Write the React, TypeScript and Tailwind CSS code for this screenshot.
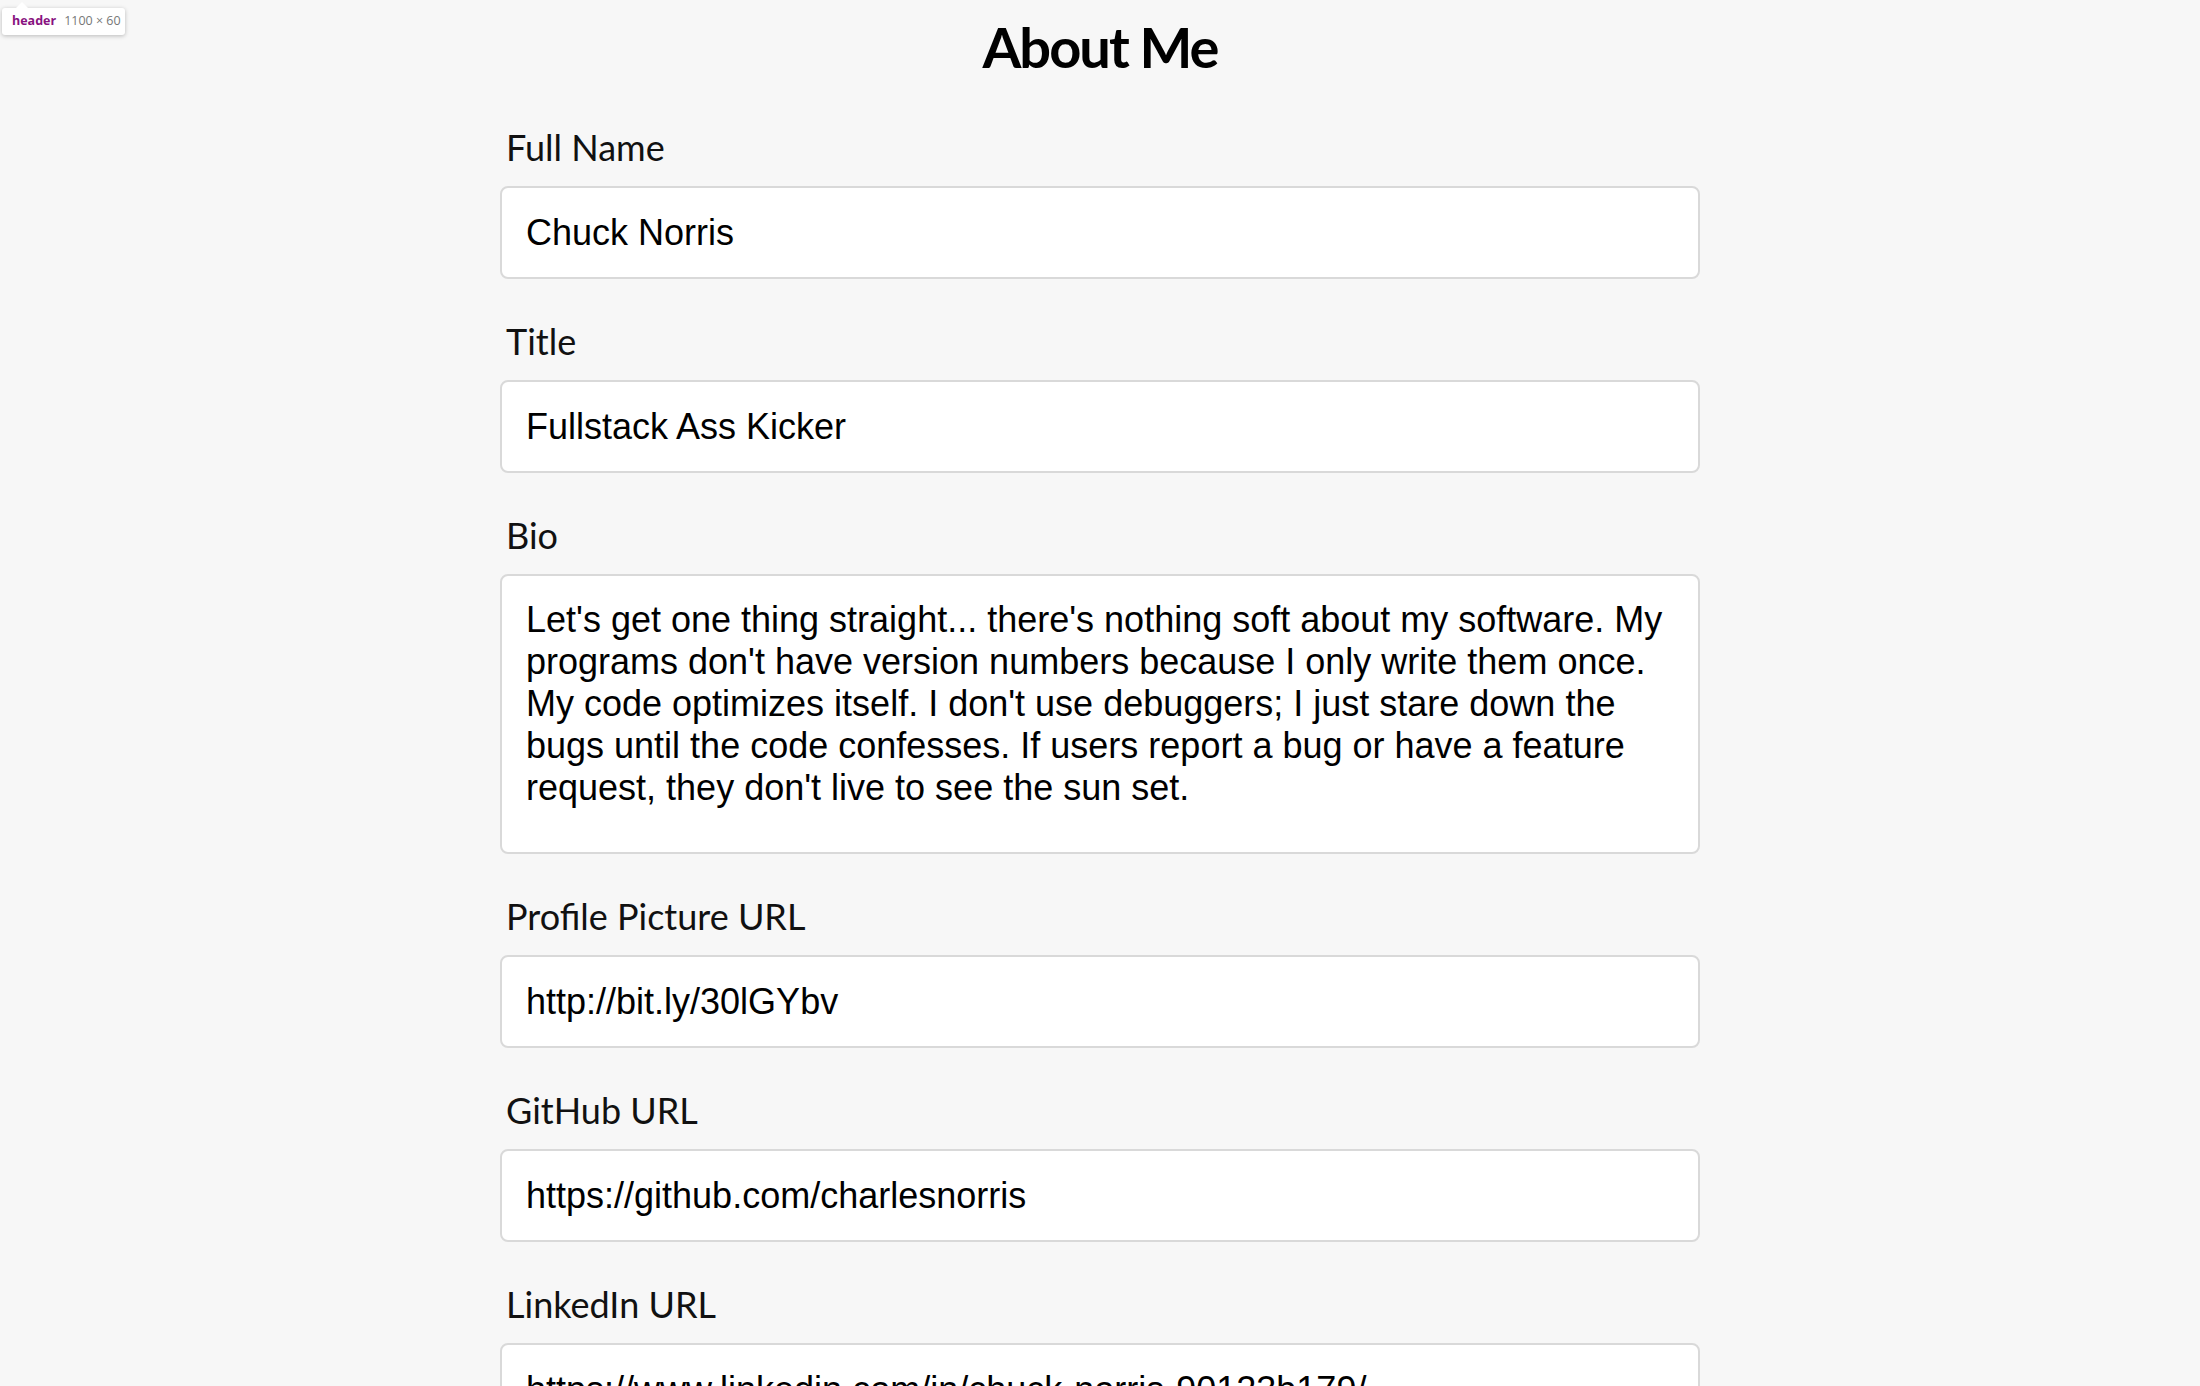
import React from 'react';

const fields: { label: string; value: string; multiline?: boolean }[] = [
  { label: 'Full Name', value: 'Chuck Norris' },
  { label: 'Title', value: 'Fullstack Ass Kicker' },
  {
    label: 'Bio',
    value:
      "Let's get one thing straight... there's nothing soft about my software. My programs don't have version numbers because I only write them once. My code optimizes itself. I don't use debuggers; I just stare down the bugs until the code confesses. If users report a bug or have a feature request, they don't live to see the sun set.",
    multiline: true,
  },
  { label: 'Profile Picture URL', value: 'http://bit.ly/30lGYbv' },
  { label: 'GitHub URL', value: 'https://github.com/charlesnorris' },
  { label: 'LinkedIn URL', value: 'https://www.linkedin.com/in/chuck-norris-90123b179/' },
];

const boxClass =
  'block w-full rounded-lg border-2 border-[#d9d9d9] bg-white pl-[24px] pr-[22px] text-[36px] text-black outline-none font-["Liberation_Sans",Arial,sans-serif]';

function DevtoolsBadge() {
  return (
    <div className="absolute left-[2px] top-[8px] z-10">
      <div className="absolute -top-[6px] left-[14px] h-0 w-0 border-x-[6px] border-b-[6px] border-x-transparent border-b-white" />
      <div className="flex h-[27px] w-[123px] items-center gap-[8px] rounded-[3px] bg-white pl-[10px] shadow-[0_1px_4px_rgba(0,0,0,0.25)] font-['Open_Sans',sans-serif] text-[12.5px]">
        <span className="font-bold text-[#881280]">header</span>
        <span className="text-[#777]">1100 × 60</span>
      </div>
    </div>
  );
}

export default function App() {
  return (
    <div className="relative min-h-screen bg-[#f7f7f7] text-[#111]">
      <DevtoolsBadge />
      <header className="pt-[13px] text-center">
        <h1 className="font-['Lato',sans-serif] text-[56px] font-bold leading-[67px] tracking-[-0.035em] text-black">
          About Me
        </h1>
      </header>

      <form className="mx-auto mt-[46px] flex w-[1200px] flex-col gap-[41px] pb-20">
        {fields.map((f) => (
          <div key={f.label}>
            <label className="mb-[18px] block pl-[6px] font-['Lato',sans-serif] text-[36px] leading-[42px] text-[#111]">
              {f.label}
            </label>
            {f.multiline ? (
              <textarea
                readOnly
                defaultValue={f.value}
                className={`${boxClass} h-[280px] resize-none py-[23px] leading-[42px]`}
              />
            ) : (
              <input readOnly type="text" defaultValue={f.value} className={`${boxClass} py-6 leading-[41px]`} />
            )}
          </div>
        ))}
      </form>
    </div>
  );
}
